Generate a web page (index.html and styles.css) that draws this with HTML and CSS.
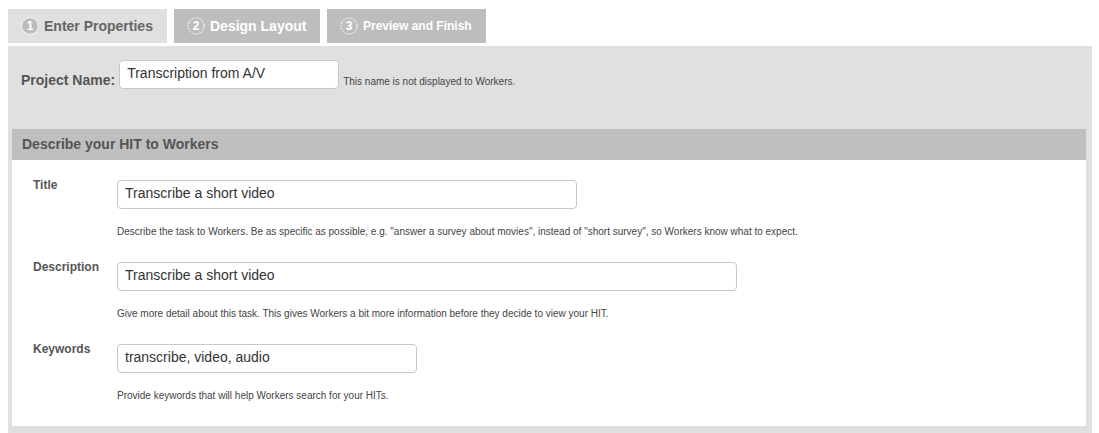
FILE: index.html
```html
<!DOCTYPE html>
<html>
<head>
<meta charset="utf-8">
<link rel="stylesheet" href="styles.css">
</head>
<body>
<div class="tabs">
  <div class="tab tab-active tab-w1">
    <svg class="num" width="18" height="18" viewBox="0 0 18 18"><circle cx="9" cy="9" r="8.3" fill="#bcbcbc" stroke="#f4f4f4" stroke-width="1"/><text x="9" y="13.2" text-anchor="middle" font-family="Liberation Sans, Arial, sans-serif" font-size="12" fill="#fff">1</text></svg>
    <span class="tab-label">Enter Properties</span>
  </div>
  <div class="tab tab-w2">
    <svg class="num" width="18" height="18" viewBox="0 0 18 18"><circle cx="9" cy="9" r="8" fill="none" stroke="#fff" stroke-width="1" stroke-dasharray="2 1"/><text x="9" y="13.2" text-anchor="middle" font-family="Liberation Sans, Arial, sans-serif" font-size="12" fill="#fff">2</text></svg>
    <span class="tab-label">Design Layout</span>
  </div>
  <div class="tab tab-w3">
    <svg class="num" width="18" height="18" viewBox="0 0 18 18"><circle cx="9" cy="9" r="8" fill="none" stroke="#fff" stroke-width="1" stroke-dasharray="2 1"/><text x="9" y="13.2" text-anchor="middle" font-family="Liberation Sans, Arial, sans-serif" font-size="12" fill="#fff">3</text></svg>
    <span class="tab-label tab-label-small">Preview and Finish</span>
  </div>
</div>
<div class="panel">
  <div class="project-row">
    <label class="project-label">Project Name:</label>
    <input class="field project-input" type="text" value="Transcription from A/V">
    <span class="project-hint">This name is not displayed to Workers.</span>
  </div>
  <div class="section">
    <div class="section-head">Describe your HIT to Workers</div>
    <div class="section-body">
      <div class="row">
        <div class="row-label">Title</div>
        <div class="row-main">
          <input class="field w-title" type="text" value="Transcribe a short video">
          <div class="hint">Describe the task to Workers. Be as specific as possible, e.g. "answer a survey about movies", instead of "short survey", so Workers know what to expect.</div>
        </div>
      </div>
      <div class="row">
        <div class="row-label">Description</div>
        <div class="row-main">
          <input class="field w-desc" type="text" value="Transcribe a short video">
          <div class="hint">Give more detail about this task. This gives Workers a bit more information before they decide to view your HIT.</div>
        </div>
      </div>
      <div class="row">
        <div class="row-label">Keywords</div>
        <div class="row-main">
          <input class="field w-key" type="text" value="transcribe, video, audio">
          <div class="hint">Provide keywords that will help Workers search for your HITs.</div>
        </div>
      </div>
    </div>
  </div>
</div>
</body>
</html>
```

FILE: styles.css
```css
html, body {
  margin: 0;
  padding: 0;
  background: #ffffff;
}
body {
  padding: 9px 7px 0 8px;
  font-family: "Liberation Sans", Arial, Helvetica, sans-serif;
  color: #555;
}
.tabs {
  display: flex;
  height: 34px;
  margin-bottom: 3px;
}
.tab {
  display: flex;
  align-items: center;
  background: #bdbdbd;
  color: #fff;
  font-weight: bold;
  font-size: 14px;
  padding-left: 13px;
  box-sizing: border-box;
  margin-right: 7px;
}
.tab-active {
  background: #e0e0e0;
  color: #666;
}
.tab-w1 { width: 159px; }
.tab-w2 { width: 146px; margin-right: 7px; }
.tab-w3 { width: 159px; }
.num {
  display: block;
  margin-right: 4px;
  flex: none;
}
.tab-label {
  padding-left: 1px;
}
.tab-label-small {
  font-size: 12px;
}
.panel {
  background: #e0e0e0;
  padding: 0 6px 10px 4px;
}
.project-row {
  display: flex;
  align-items: flex-start;
  height: 83px;
  padding-left: 9px;
  box-sizing: border-box;
  padding-top: 14px;
}
.project-label {
  font-size: 14px;
  font-weight: bold;
  color: #555;
  line-height: 16px;
  margin-top: 12px;
  margin-right: 4px;
}
.field {
  display: block;
  box-sizing: border-box;
  height: 29px;
  border: 1px solid #c8c8c8;
  border-radius: 4px;
  background: #fff;
  padding: 0 7px 3px 7px;
  margin: 0;
  font-family: "Liberation Sans", Arial, Helvetica, sans-serif;
  font-size: 14px;
  color: #333;
  outline: none;
}
.project-input {
  width: 220px;
}
.project-hint {
  font-size: 10px;
  line-height: 12px;
  color: #444;
  margin-left: 4px;
  margin-top: 16px;
}
.section {
  background: #fff;
}
.section-head {
  background: #bfbfbf;
  height: 31px;
  line-height: 31px;
  padding-left: 10px;
  font-size: 14px;
  font-weight: bold;
  color: #555;
}
.section-body {
  padding: 20px 0 23px 21px;
  display: flex;
  flex-direction: column;
  gap: 23px;
}
.row {
  display: grid;
  grid-template-columns: 84px 1fr;
}
.row-label {
  font-size: 12px;
  font-weight: bold;
  line-height: 14px;
  color: #555;
  margin-top: -2px;
}
.row-main {
  display: flex;
  flex-direction: column;
}
.w-title { width: 460px; }
.w-desc { width: 620px; }
.w-key { width: 300px; }
.hint {
  margin-top: 16px;
  font-size: 10px;
  line-height: 14px;
  color: #444;
}
```
